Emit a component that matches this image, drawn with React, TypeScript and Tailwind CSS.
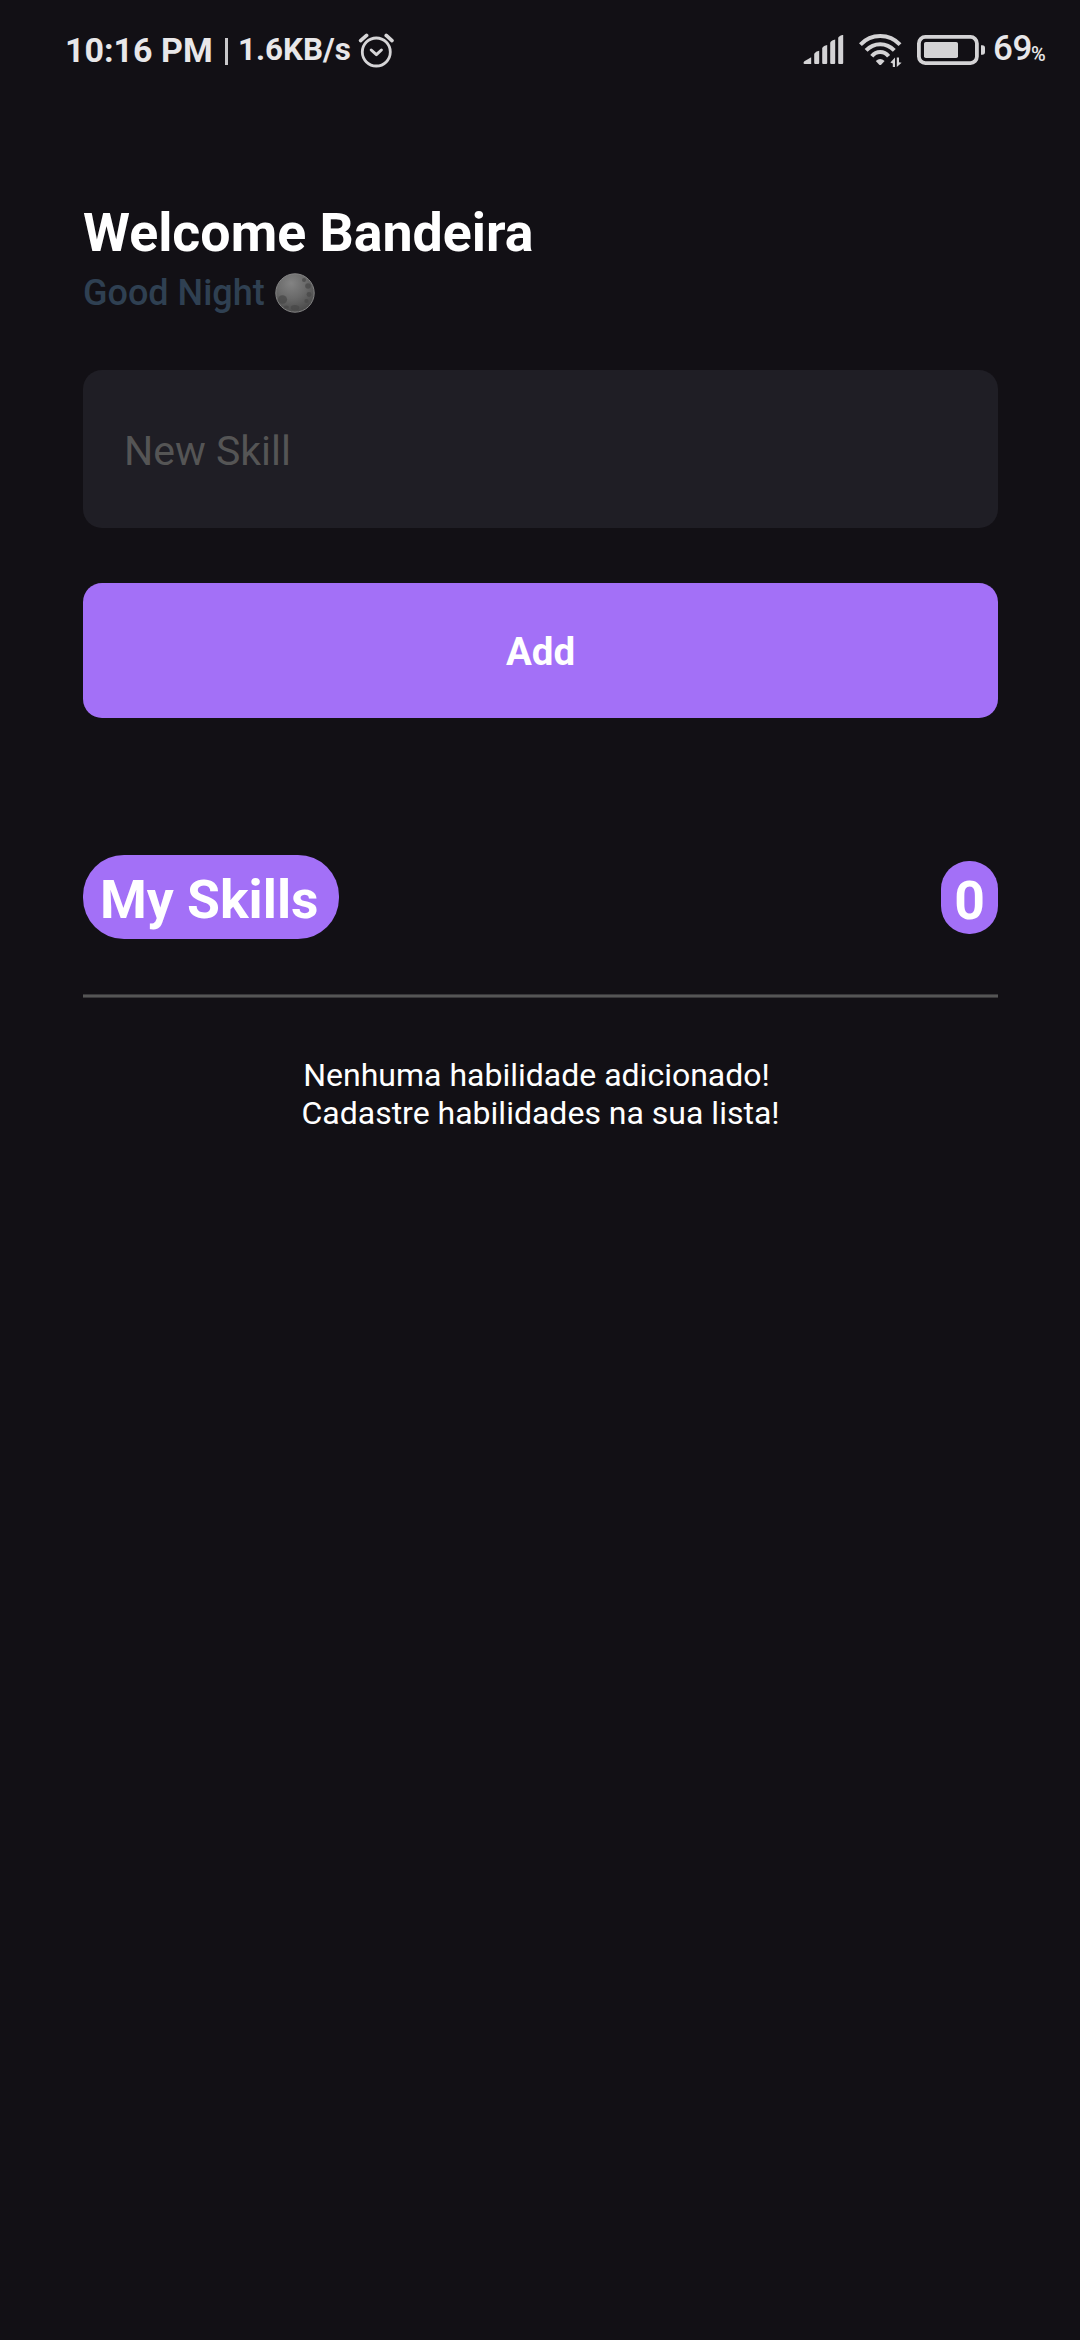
function AlarmIcon() {
  return (
    <svg width="36" height="36" viewBox="0 0 36 36" fill="none" stroke="#d6d5d7" strokeLinecap="round">
      <circle cx="18.3" cy="20" r="14" strokeWidth="2.8" />
      <path d="M2.6 8.6 8.6 3.4M28.2 3.4 34 8.6" strokeWidth="3.6" />
      <path d="m13.2 18 5.2 4.6 5-4.6" strokeWidth="3" strokeLinejoin="round" />
    </svg>
  );
}

function SignalIcon() {
  return (
    <svg width="42" height="30" viewBox="0 0 42 30" fill="#d4d3d5">
      <path d="M8.2 22.2V29H2.2C0 29 .2 27.4 1.4 26.2Z" />
      <path d="M11.2 19.5c0-1.5 3-3.5 5-3.7V28q0 1-1 1h-3q-1 0-1-1Z" />
      <path d="M19.2 13.5c0-1.5 3-3.3 5-3.5V28q0 1-1 1h-3q-1 0-1-1Z" />
      <path d="M27.2 8c0-1.5 3-3.3 5-3.5V28q0 1-1 1h-3q-1 0-1-1Z" />
      <path d="M35.2 3c0-1.5 3-3 5-3V28q0 1-1 1h-3q-1 0-1-1Z" />
    </svg>
  );
}

function WifiIcon() {
  return (
    <svg width="44" height="34" viewBox="0 0 44 34" fill="none" stroke="#d4d3d5" strokeWidth="4">
      <path d="M1.4 10.6Q9.5 2 21.2 2T41 10.6" />
      <path d="M7.1 16.4Q13 10.2 21.2 10.2T35.3 16.4" />
      <path d="M12.8 22.2Q16.2 18 21.2 18T29.6 22.2" />
      <path d="M16.8 27Q21.2 23.2 25.6 27L22.4 30.4Q21.2 31.4 20 30.4Z" fill="#d4d3d5" stroke="none" />
      <path d="M36 23.5V33h-2.2v-3.6L31.4 28.6ZM37.8 33v-9.5H40v4.8l2.6.4Z" fill="#d4d3d5" stroke="none" />
    </svg>
  );
}

function BatteryIcon() {
  return (
    <svg width="68" height="30" viewBox="0 0 68 30" fill="none">
      <rect x="1.9" y="1.9" width="58" height="26.2" rx="6.5" stroke="#d4d3d5" strokeWidth="3.8" />
      <rect x="7" y="7" width="34" height="16" rx="1.8" fill="#d4d3d5" />
      <path d="M64 10.3h1.4q2.6 0 2.6 2.6v4.2q0 2.6-2.6 2.6H64Z" fill="#d4d3d5" />
    </svg>
  );
}

function MoonIcon() {
  return (
    <svg width="40" height="40" viewBox="0 0 40 40">
      <defs>
        <radialGradient id="moon" cx=".4" cy=".25" r=".8">
          <stop offset="0" stopColor="#838383" />
          <stop offset=".5" stopColor="#696969" />
          <stop offset="1" stopColor="#474747" />
        </radialGradient>
      </defs>
      <circle cx="20" cy="20" r="19.2" fill="url(#moon)" stroke="#858585" strokeWidth="1" />
      <g fill="#484848" opacity=".75">
        <ellipse cx="7.5" cy="26.5" rx="4.6" ry="4.3" />
        <ellipse cx="20" cy="34.7" rx="4.2" ry="2.6" />
        <circle cx="29" cy="7" r="2" />
        <circle cx="33" cy="13" r="2.8" />
        <circle cx="34" cy="21.5" r="2.4" />
        <circle cx="31.5" cy="28" r="2.1" />
        <ellipse cx="11.5" cy="34" rx="2.4" ry="1.5" />
      </g>
    </svg>
  );
}

function StatusBar() {
  return (
    <header className="flex h-[100px] items-start justify-between pl-[65px] pr-[34px] pt-[30px] text-[#e8e7e9]">
      <div className="flex h-[40px] items-center">
        <span className="w-[150px] whitespace-nowrap text-[34px] font-bold leading-[41px]">10:16 PM</span>
        <span className="mt-[3px] ml-[10px] h-[27px] w-[3px] bg-[#c9c8ca]" />
        <span className="ml-[10px] w-[115px] whitespace-nowrap text-[31.4px] font-bold leading-[42px]">1.6KB/s</span>
        <span className="ml-[5px]"><AlarmIcon /></span>
      </div>
      <div className="flex h-[40px] items-center">
        <SignalIcon />
        <span className="ml-[14px] mt-[2px]"><WifiIcon /></span>
        <span className="ml-[14px]"><BatteryIcon /></span>
        <span className="-mt-[2px] ml-[8px] w-[38px] text-[35px] font-medium leading-[40px] tracking-[-0.5px]">69</span>
        <span className="w-[15px] pt-[9px] text-[20px] font-medium leading-[31px]">%</span>
      </div>
    </header>
  );
}

export default function App() {
  return (
    <div className="flex min-h-[2340px] w-full flex-col bg-[#121015] font-[Roboto,sans-serif]">
      <StatusBar />
      <main className="flex flex-col pl-[83px] pr-[82px] pt-[101px] text-white">
        <h1 className="text-[53.7px] font-bold leading-[64px]">Welcome Bandeira</h1>
        <p className="mt-[3px] flex h-[50px] items-center text-[36px] font-medium leading-[50px] text-[#2f4052]">
          <span className="w-[192px] whitespace-nowrap">Good Night</span>
          <MoonIcon />
        </p>
        <input
          placeholder="New Skill"
          className="mt-[52px] h-[158px] rounded-[19px] bg-[#1f1e25] px-[41px] pt-[4px] text-[41px] outline-none placeholder:text-[#555555] placeholder:opacity-100"
        />
        <button className="mt-[55px] h-[135px] rounded-[19px] bg-[#a370f7] pt-[2px] text-[38.5px] font-bold">Add</button>
        <div className="mt-[137px] flex h-[84px] items-center justify-between text-[53.5px] font-bold">
          <h2 className="h-[84px] w-[256px] whitespace-nowrap rounded-[41px] bg-[#a370f7] pl-[17px] leading-[89px]">My Skills</h2>
          <span className="h-[73px] w-[57px] rounded-[28px] bg-[#a370f7] text-center leading-[79px]">0</span>
        </div>
        <hr className="mt-[55px] h-[4px] border-0 border-y border-[#38373a] bg-[#555555]" />
        <p className="mt-[58px] whitespace-pre text-center text-[32px] leading-[38px]">
          {"Nenhuma habilidade adicionado! \u200b\nCadastre habilidades na sua lista!"}
        </p>
      </main>
    </div>
  );
}
